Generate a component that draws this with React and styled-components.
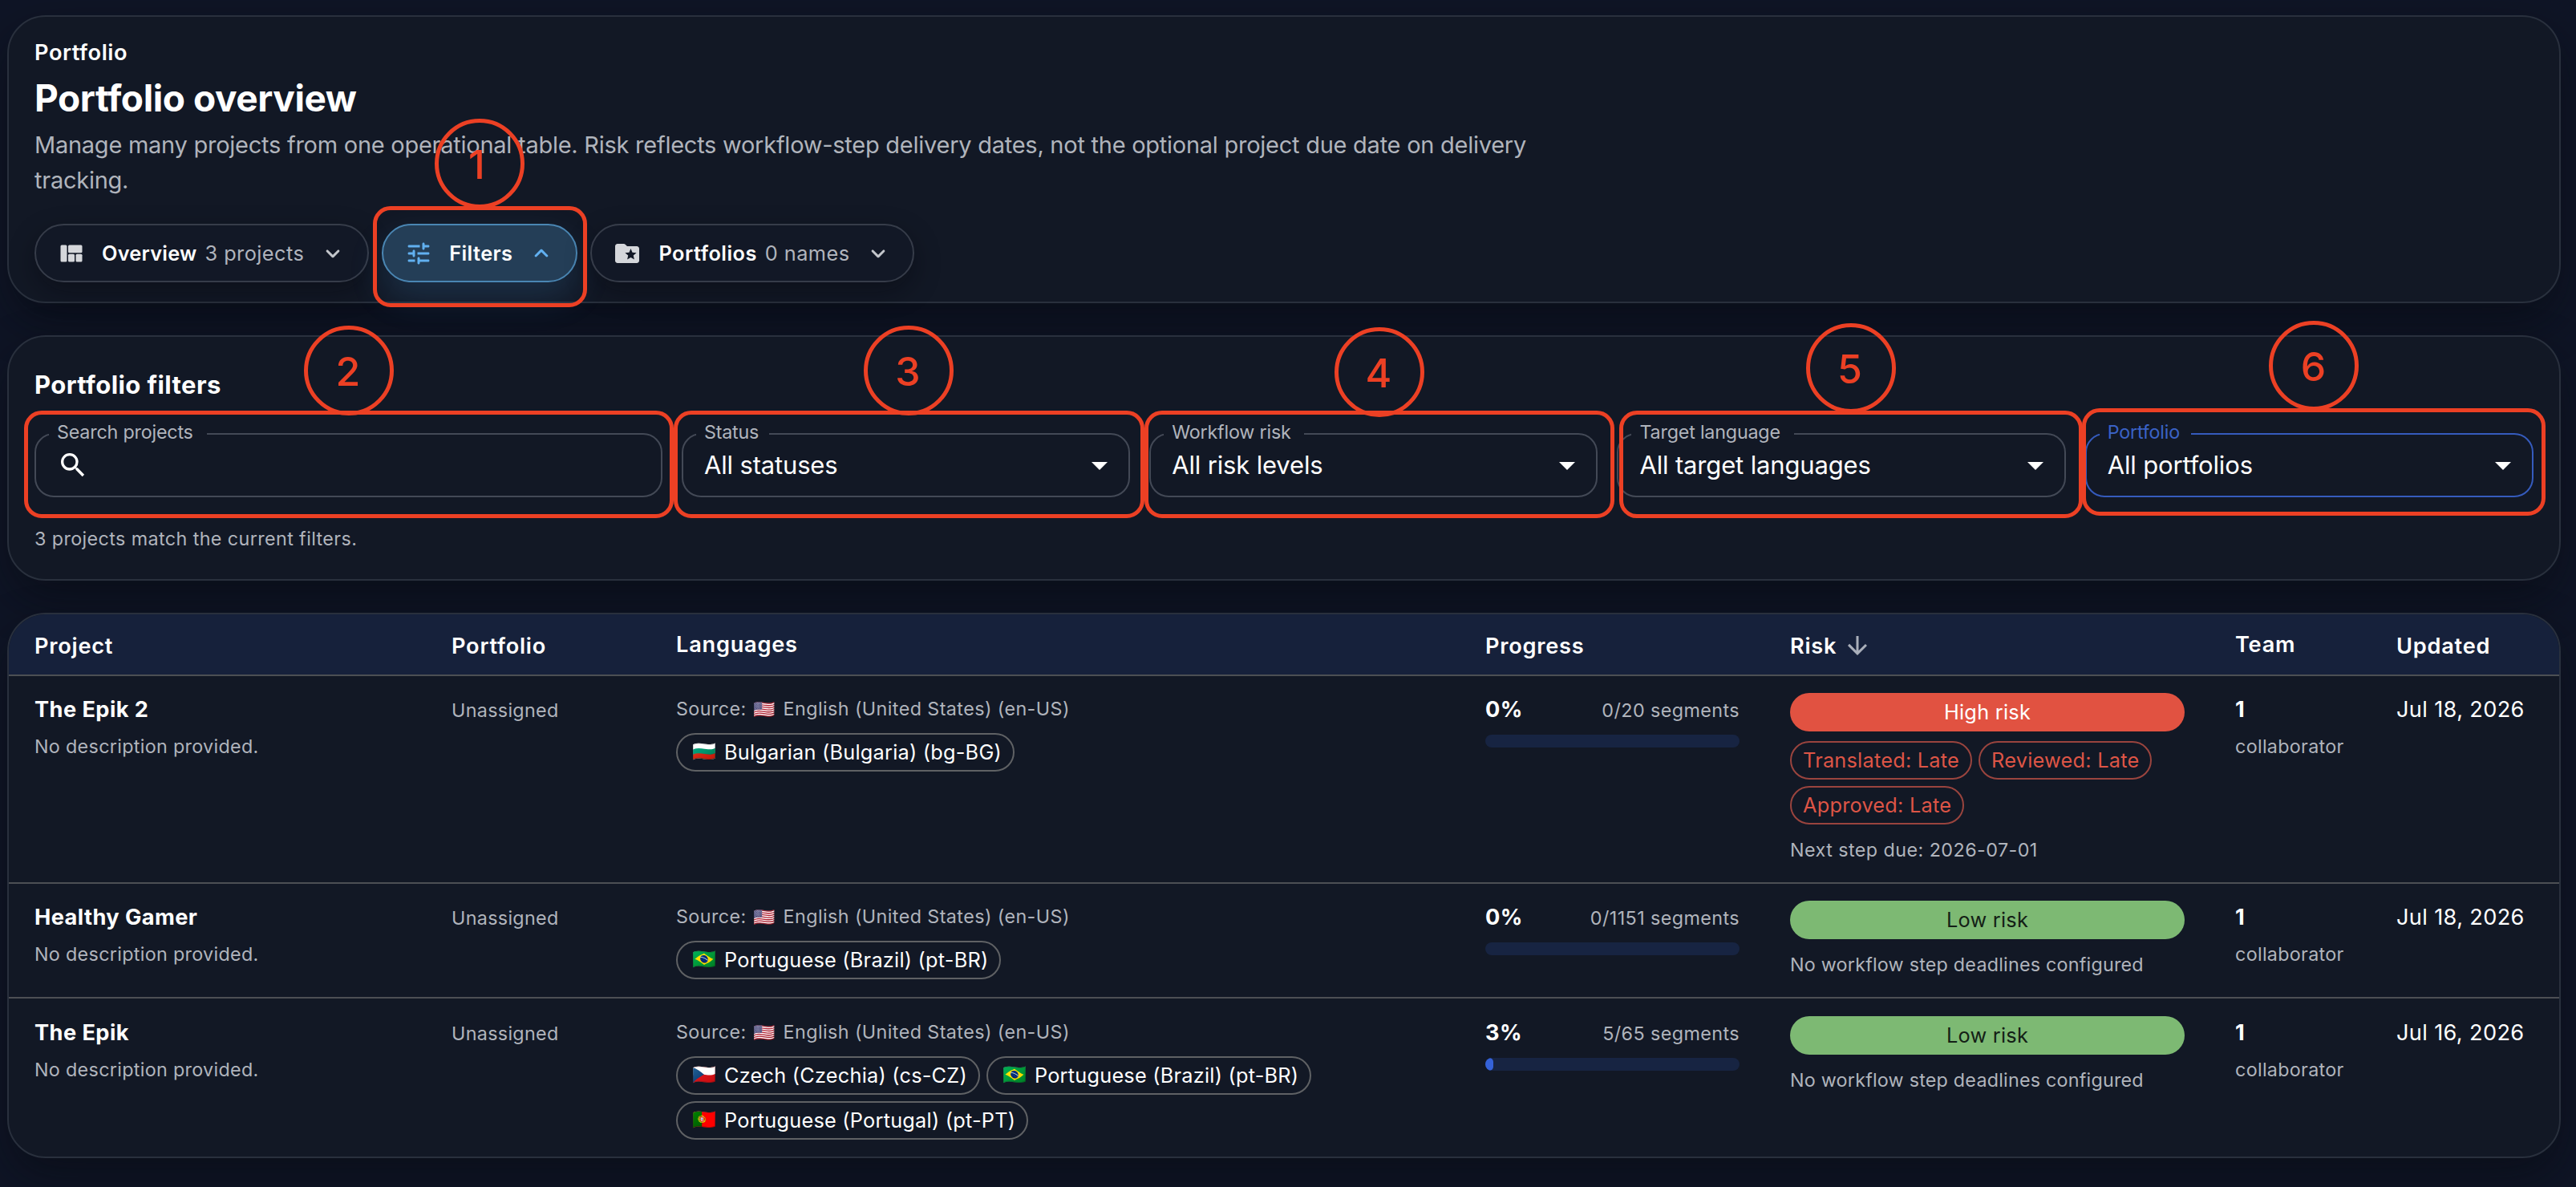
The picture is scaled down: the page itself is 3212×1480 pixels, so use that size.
import React from "react";
import styled, { createGlobalStyle } from "styled-components";
import { MdArrowDownward, MdArrowDropDown, MdSearch } from "react-icons/md";

const GlobalStyle = createGlobalStyle`
  * {
    box-sizing: border-box;
  }

  body {
    margin: 0;
    background: #0f1526;
    color: #fff;
    font-family: Inter, Roboto, sans-serif;
  }
`;

const Page = styled.div`
  position: relative;
  min-height: 1480px;
  padding: 19px 19px 36px 9px;
  display: flex;
  flex-direction: column;
  gap: 40px;
`;

const Panel = styled.section`
  border: 2px solid #29303d;
  border-radius: 48px;
  background: #121825;
  box-shadow: 0 24px 56px rgba(7, 8, 12, 0.46);
`;

/* ---------- hero ---------- */

const HeroPanel = styled(Panel)`
  height: 359px;
  padding: 33px 32px 24px;
`;

const Eyebrow = styled.div`
  font-size: 27.2px;
  font-weight: 600;
  line-height: 24px;
  letter-spacing: 0.54px;
`;

const Title = styled.h1`
  margin: 15px 0 0;
  font-size: 46px;
  font-weight: 700;
  line-height: 58px;
  letter-spacing: -0.42px;
`;

const Lead = styled.p`
  margin: 8px 0 32px;
  max-width: 1920px;
  color: #b0b4bc;
  font-size: 29px;
  line-height: 44px;
  letter-spacing: -0.257px;
`;

const Toolbar = styled.div`
  display: flex;
  gap: 16px;
`;

const PillButton = styled.button`
  display: flex;
  align-items: center;
  height: 73px;
  padding: 0 25px 0 26px;
  border: 2px solid ${(p) => (p.$active ? "#4a86b3" : "#363c49")};
  border-radius: 37px;
  background: ${(p) => (p.$active ? "#243e57" : "#121826")};
  color: #fff;
  font-family: inherit;
  font-size: 25.3px;
  font-weight: 600;
  letter-spacing: ${(p) => p.$tracking}px;
  box-shadow: ${(p) =>
    p.$active
      ? "0 20px 44px rgba(66, 140, 200, 0.2)"
      : "0 12px 32px rgba(5, 6, 12, 0.36)"};
`;

const PillIcon = styled.svg`
  width: 36px;
  height: 36px;
  margin-right: ${(p) => p.$gap}px;
  fill: ${(p) => (p.$active ? "#61b0f0" : "#d5d7db")};
`;

const PillCount = styled.span`
  margin-left: 10px;
  color: #b0b4bc;
  font-weight: 400;
  letter-spacing: 0.45px;
`;

const PillChevron = styled.svg`
  width: 36px;
  height: 36px;
  margin-left: 18px;
  fill: ${(p) => (p.$active ? "#61b0f0" : "#c3c6cb")};
`;

/* ---------- filters ---------- */

const FilterPanel = styled(Panel)`
  height: 306px;
  padding: 40px 32px 30px;
`;

const FilterTitle = styled.h2`
  margin: 0;
  font-size: 31px;
  font-weight: 700;
  line-height: 40px;
  letter-spacing: 0.42px;
`;

const FilterGrid = styled.div`
  display: grid;
  grid-template-columns: 1.4fr repeat(4, 1fr);
  gap: 24px;
  margin-top: 29px;
`;

const Outline = styled.fieldset`
  min-width: 0;
  height: 91px;
  margin: 0;
  padding: 0 12px 11px 16px;
  border: 2px solid ${(p) => (p.$focused ? "#355bbd" : "#434956")};
  border-radius: 24px;
`;

const OutlineLabel = styled.legend`
  padding: 0 ${(p) => p.$notch}px 4px 10px;
  color: ${(p) => (p.$focused ? "#3a62c6" : "#b0b4bc")};
  font-size: 23.3px;
  line-height: 20px;
  letter-spacing: -0.2px;
`;

const FieldBody = styled.div`
  display: flex;
  align-items: center;
  justify-content: space-between;
  height: 54px;
  padding-left: 10px;
  font-size: 31px;
  letter-spacing: -0.16px;
`;

const FieldValue = styled.span`
  padding-bottom: 2px;
`;

const MatchCount = styled.p`
  margin: 32px 0 0;
  color: #b0b4bc;
  font-size: 23.3px;
  line-height: 40px;
  letter-spacing: 0.4px;
`;

/* ---------- table ---------- */

const TablePanel = styled(Panel)`
  overflow: hidden;
  height: 680px;
`;

const Row = styled.div`
  display: grid;
  grid-template-columns: 520px 280px 1fr 380px 555px 201px 235px;
  padding: 21px 0 20px;
  border-bottom: 2px solid #4c4f54;

  &:last-child {
    padding: 22px 0 21px;
    border-bottom: 0;
  }
`;

const HeadRow = styled(Row)`
  align-items: center;
  height: 77px;
  padding: 0;
  background: #16213b;
`;

const Cell = styled.div`
  min-width: 0;
  padding: 0 31px 0 32px;
`;

const HeadCell = styled(Cell)`
  display: flex;
  align-items: center;
  gap: 8px;
  padding-top: ${(p) => (p.$sortable ? 4 : 0)}px;
  font-size: 27.2px;
  font-weight: 600;
  line-height: 36px;
  letter-spacing: 0.76px;

  svg {
    margin-top: -2px;
    color: #a9afba;
  }
`;

const Strong = styled.div`
  padding-top: 1px;
  font-size: 27.2px;
  font-weight: 700;
  line-height: 40px;
  letter-spacing: 0.42px;
`;

const DateText = styled(Strong)`
  font-weight: 400;
  letter-spacing: 0.34px;
  white-space: nowrap;
`;

const Muted = styled.div`
  margin-top: ${(p) => p.$top || 0}px;
  color: #b0b4bc;
  font-size: 23.3px;
  line-height: ${(p) => p.$line || 40}px;
  letter-spacing: 0.32px;
`;

const SmallNote = styled(Muted)`
  letter-spacing: ${(p) => p.$tracking}px;
`;

const SourceText = styled(Muted)`
  letter-spacing: 0.42px;
`;

const Flag = styled.span`
  display: inline-block;
  width: ${(p) => p.$slot}px;
  font-family: "Noto Color Emoji", sans-serif;
  font-size: ${(p) => p.$size}px;
  line-height: 1;
  letter-spacing: 0;
`;

const SourceFlag = styled(Flag)`
  margin-left: 2px;
`;

const ChipList = styled.div`
  display: flex;
  flex-wrap: wrap;
  gap: 8px;
  margin-top: ${(p) => p.$top}px;
`;

const Chip = styled.span`
  display: inline-flex;
  align-items: center;
  height: 48px;
  padding: 0 14px 2px 18px;
  border: 2px solid #5f6164;
  border-radius: 24px;
  font-size: 25.3px;
  letter-spacing: 0.236px;
  white-space: nowrap;
`;

const LateChip = styled(Chip)`
  padding: 0 14px 2px;
  border-color: #9a443e;
  color: #dd5546;
  letter-spacing: 0.24px;
`;

const RiskBadge = styled.div`
  display: flex;
  align-items: center;
  justify-content: center;
  height: 48px;
  padding-bottom: 1px;
  border-radius: 24px;
  background: ${(p) => (p.$high ? "#e15241" : "#7db973")};
  color: ${(p) => (p.$high ? "#fff" : "#141f16")};
  font-size: 25.3px;
  letter-spacing: 0.26px;
`;

const ProgressHead = styled.div`
  display: flex;
  align-items: baseline;
  justify-content: space-between;
  height: 40px;
`;

const Track = styled.div`
  height: 16px;
  margin-top: 12px;
  border-radius: 8px;
  background: #172442;
  overflow: hidden;
`;

const TrackFill = styled.div`
  height: 100%;
  border-radius: 8px;
  background: #3562d8;
`;

/* ---------- numbered callouts ---------- */

const CalloutBox = styled.div`
  position: absolute;
  left: ${(p) => p.$x}px;
  top: ${(p) => p.$y}px;
  width: ${(p) => p.$w}px;
  height: ${(p) => p.$h}px;
  border: 5px solid #ec4024;
  border-radius: 22px;
`;

const CalloutNumber = styled.div`
  position: absolute;
  left: ${(p) => p.$x}px;
  top: ${(p) => p.$y}px;
  display: flex;
  align-items: center;
  justify-content: center;
  width: 112px;
  height: 112px;
  padding: 2px ${(p) => p.$inset}px 0 0;
  border: 5px solid #ec4024;
  border-radius: 50%;
  color: #ec4024;
  font-size: 50px;
  font-weight: 500;
  line-height: 1;
`;

const DOWN =
  "M8.12 9.29 12 13.17l3.88-3.88c.39-.39 1.02-.39 1.41 0 .39.39.39 1.02 0 1.41l-4.59 4.59c-.39.39-1.02.39-1.41 0L6.7 10.7c-.39-.39-.39-1.02 0-1.41.39-.38 1.03-.39 1.42 0z";
const UP =
  "M8.12 14.71 12 10.83l3.88 3.88c.39.39 1.02.39 1.41 0 .39-.39.39-1.02 0-1.41L12.7 8.71c-.39-.39-1.02-.39-1.41 0L6.7 13.3c-.39.39-.39 1.02 0 1.41.39.38 1.03.39 1.42 0z";

const glyphs = {
  quilt: (
    <>
      <rect x="3" y="5" width="5.33" height="14" rx="1" />
      <rect x="9.33" y="5" width="11.67" height="6.5" rx="1" />
      <rect x="9.33" y="12.5" width="5.33" height="6.5" rx="1" />
      <rect x="15.67" y="12.5" width="5.33" height="6.5" rx="1" />
    </>
  ),
  tune: (
    <path d="M3 18c0 .55.45 1 1 1h5v-2H4c-.55 0-1 .45-1 1zM3 6c0 .55.45 1 1 1h9V5H4c-.55 0-1 .45-1 1zm10 14v-1h7c.55 0 1-.45 1-1s-.45-1-1-1h-7v-1c0-.55-.45-1-1-1s-1 .45-1 1v4c0 .55.45 1 1 1s1-.45 1-1zM7 10v1H4c-.55 0-1 .45-1 1s.45 1 1 1h3v1c0 .55.45 1 1 1s1-.45 1-1v-4c0-.55-.45-1-1-1s-1 .45-1 1zm14 2c0-.55-.45-1-1-1h-9v2h9c.55 0 1-.45 1-1zm-5-3c.55 0 1-.45 1-1V7h3c.55 0 1-.45 1-1s-.45-1-1-1h-3V4c0-.55-.45-1-1-1s-1 .45-1 1v4c0 .55.45 1 1 1z" />
  ),
  folder: (
    <path
      fillRule="evenodd"
      d="M20 6h-8l-1.41-1.41C10.21 4.21 9.7 4 9.17 4H4c-1.1 0-1.99.9-1.99 2L2 18c0 1.1.9 2 2 2h16c1.1 0 2-.9 2-2V8c0-1.1-.9-2-2-2zm-2.06 11L15 15.28 12.06 17l.78-3.33-2.59-2.24 3.41-.29L15 8l1.34 3.14 3.41.29-2.59 2.24.78 3.33z"
    />
  ),
};

const sections = [
  { icon: "quilt", label: "Overview", count: "3 projects", gap: 20, tracking: 0.25 },
  { icon: "tune", label: "Filters", active: true, gap: 20, tracking: 0.45 },
  { icon: "folder", label: "Portfolios", count: "0 names", gap: 21, tracking: 0.5 },
];

const filters = [
  { label: "Search projects", notch: 17, search: true },
  { label: "Status", value: "All statuses", notch: 13 },
  { label: "Workflow risk", value: "All risk levels", notch: 16 },
  { label: "Target language", value: "All target languages", notch: 17 },
  { label: "Portfolio", value: "All portfolios", notch: 14, focused: true },
];

const columns = [
  { title: "Project", sortable: true },
  { title: "Portfolio", sortable: true },
  { title: "Languages" },
  { title: "Progress", sortable: true },
  { title: "Risk", sortable: true, sorted: true },
  { title: "Team" },
  { title: "Updated", sortable: true },
];

const brazil = { flag: "🇧🇷", name: "Portuguese (Brazil) (pt-BR)" };

const projects = [
  {
    name: "The Epik 2",
    targets: [{ flag: "🇧🇬", name: "Bulgarian (Bulgaria) (bg-BG)" }],
    percent: 0,
    segments: "0/20",
    high: true,
    late: ["Translated: Late", "Reviewed: Late", "Approved: Late"],
    note: "Next step due: 2026-07-01",
    updated: "Jul 18, 2026",
  },
  {
    name: "Healthy Gamer",
    targets: [brazil],
    percent: 0,
    segments: "0/1151",
    note: "No workflow step deadlines configured",
    updated: "Jul 18, 2026",
  },
  {
    name: "The Epik",
    targets: [
      { flag: "🇨🇿", name: "Czech (Czechia) (cs-CZ)" },
      brazil,
      { flag: "🇵🇹", name: "Portuguese (Portugal) (pt-PT)" },
    ],
    percent: 3,
    segments: "5/65",
    note: "No workflow step deadlines configured",
    updated: "Jul 16, 2026",
  },
];

const callouts = [
  { box: [465, 257, 267, 126], dot: [542, 148], inset: 7 },
  { box: [30, 512, 810, 134], dot: [379, 406], inset: 2 },
  { box: [840, 512, 587, 134], dot: [1077, 406], inset: 2 },
  { box: [1427, 512, 586, 134], dot: [1664, 408], inset: 2 },
  { box: [2019, 512, 578, 134], dot: [2252, 403], inset: 3 },
  { box: [2596, 509, 578, 134], dot: [2829, 400], inset: 1 },
];

function SectionPill({ icon, label, count, active, gap, tracking }) {
  return (
    <PillButton $active={active} $tracking={tracking}>
      <PillIcon viewBox="0 0 24 24" $active={active} $gap={gap}>
        {glyphs[icon]}
      </PillIcon>
      {label}
      {count && <PillCount>{count}</PillCount>}
      <PillChevron viewBox="0 0 24 24" $active={active}>
        <path d={active ? UP : DOWN} />
      </PillChevron>
    </PillButton>
  );
}

function FilterField({ label, value, notch, search, focused }) {
  return (
    <Outline $focused={focused}>
      <OutlineLabel $focused={focused} $notch={notch}>
        {label}
      </OutlineLabel>
      <FieldBody>
        {search ? <MdSearch size={40} /> : <FieldValue>{value}</FieldValue>}
        {!search && <MdArrowDropDown size={48} />}
      </FieldBody>
    </Outline>
  );
}

function ProjectRow({ project }) {
  return (
    <Row>
      <Cell>
        <Strong>{project.name}</Strong>
        <Muted $top={6}>No description provided.</Muted>
      </Cell>
      <Cell>
        <Muted $line={43}>Unassigned</Muted>
      </Cell>
      <Cell>
        <SourceText>
          Source:{" "}
          <SourceFlag $slot={37} $size={22}>
            🇺🇸
          </SourceFlag>
          English (United States) (en-US)
        </SourceText>
        <ChipList $top={10}>
          {project.targets.map((t) => (
            <Chip key={t.name}>
              <Flag $slot={40} $size={24}>
                {t.flag}
              </Flag>
              {t.name}
            </Chip>
          ))}
        </ChipList>
      </Cell>
      <Cell>
        <ProgressHead>
          <Strong>{project.percent}%</Strong>
          <SmallNote $tracking={0.42}>{project.segments} segments</SmallNote>
        </ProgressHead>
        <Track>
          <TrackFill style={{ width: `${project.percent}%` }} />
        </Track>
      </Cell>
      <Cell>
        <RiskBadge $high={project.high}>
          {project.high ? "High risk" : "Low risk"}
        </RiskBadge>
        {project.late && (
          <ChipList $top={12}>
            {project.late.map((step) => (
              <LateChip key={step}>{step}</LateChip>
            ))}
          </ChipList>
        )}
        <SmallNote $top={12} $tracking={project.high ? 0.45 : 0.22}>
          {project.note}
        </SmallNote>
      </Cell>
      <Cell>
        <Strong>1</Strong>
        <Muted $top={6}>collaborator</Muted>
      </Cell>
      <Cell>
        <DateText>{project.updated}</DateText>
      </Cell>
    </Row>
  );
}

export default function App() {
  return (
    <>
      <GlobalStyle />
      <Page>
        <HeroPanel>
          <Eyebrow>Portfolio</Eyebrow>
          <Title>Portfolio overview</Title>
          <Lead>
            Manage many projects from one operational table. Risk reflects
            workflow-step delivery dates, not the optional project due date on
            delivery tracking.
          </Lead>
          <Toolbar>
            {sections.map((s) => (
              <SectionPill key={s.label} {...s} />
            ))}
          </Toolbar>
        </HeroPanel>

        <FilterPanel>
          <FilterTitle>Portfolio filters</FilterTitle>
          <FilterGrid>
            {filters.map((f) => (
              <FilterField key={f.label} {...f} />
            ))}
          </FilterGrid>
          <MatchCount>3 projects match the current filters.</MatchCount>
        </FilterPanel>

        <TablePanel>
          <HeadRow>
            {columns.map((c) => (
              <HeadCell key={c.title} $sortable={c.sortable}>
                {c.title}
                {c.sorted && <MdArrowDownward size={36} />}
              </HeadCell>
            ))}
          </HeadRow>
          {projects.map((p) => (
            <ProjectRow key={p.name} project={p} />
          ))}
        </TablePanel>

        {callouts.map(({ box, dot, inset }, i) => (
          <React.Fragment key={i}>
            <CalloutBox $x={box[0]} $y={box[1]} $w={box[2]} $h={box[3]} />
            <CalloutNumber $x={dot[0]} $y={dot[1]} $inset={inset}>
              {i + 1}
            </CalloutNumber>
          </React.Fragment>
        ))}
      </Page>
    </>
  );
}
